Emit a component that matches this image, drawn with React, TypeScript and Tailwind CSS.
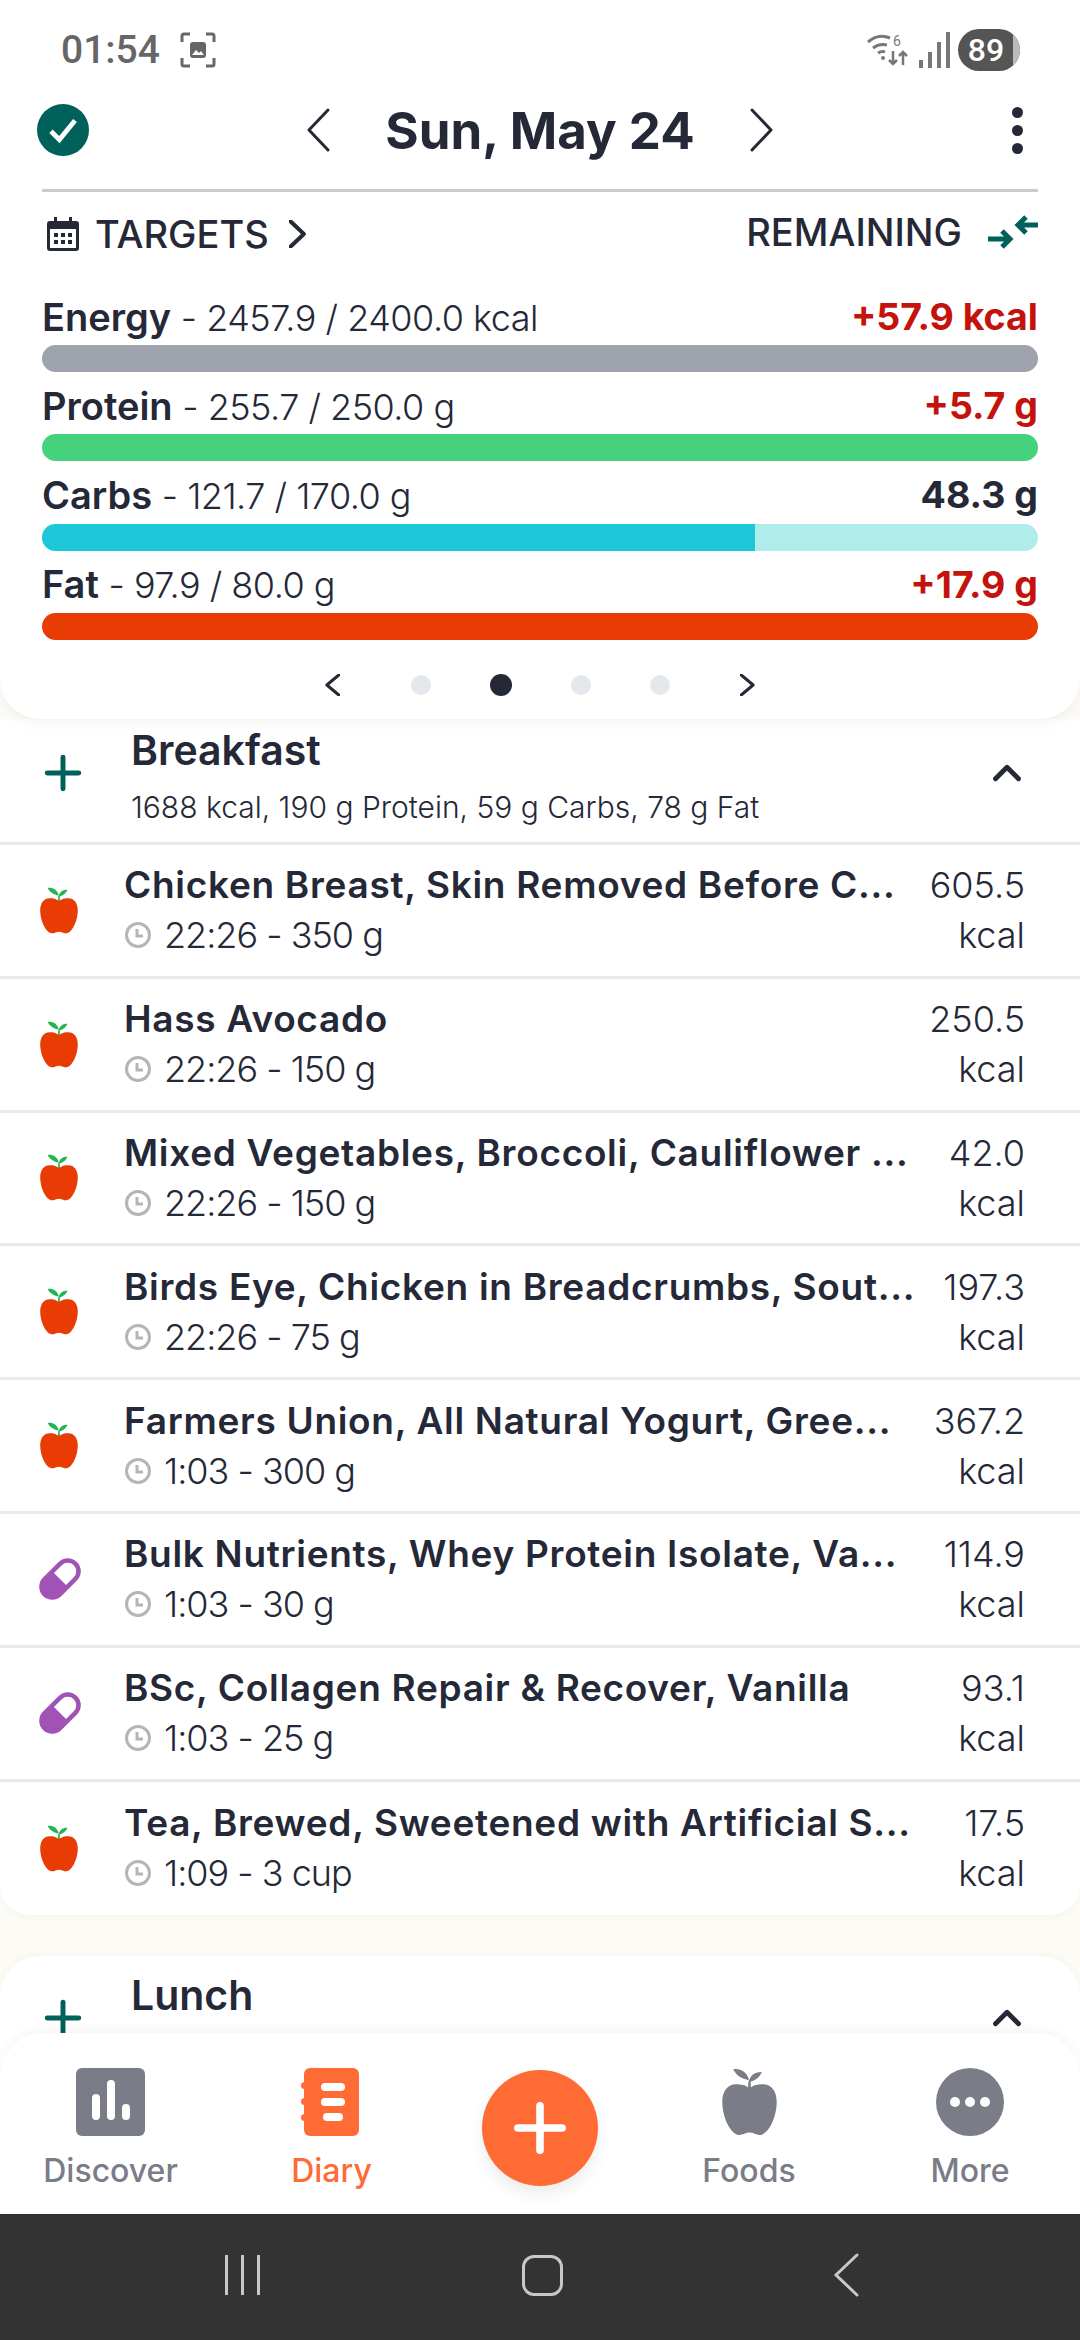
import { ChevronUp, Plus } from 'lucide-react'

const AppleIcon = ({ fill = '#e93c05', leaf = '#22b455', className = '' }: { fill?: string; leaf?: string; className?: string }) => (
  <svg viewBox="0 0 40 50" className={className}>
    <path d="M20 15c-3-2.500-6-3-10-3C4 12 0 17 0 25c0 10 5 22 11 24 3 1 6-1.500 9-1.500s6 2.500 9 1.500c6-2 11-14 11-24 0-8-4-13-10-13-4 0-7 .5-10 3z" fill={fill} />
    <path d="M19 15c0-3 0-5 1-7 1 1 1 3 1 7zM19 9C16 8 11 7 8 1c5-1 10 2 11.500 7zM20 9c1-4 4-6 9-6-1 3-4 6-8 7z" fill={leaf} />
  </svg>
)

const PillIcon = () => (
  <svg viewBox="0 0 44 44" className="h-[44px] w-[44px]">
    <g transform="rotate(-45 22 22)">
      <rect x="-2" y="9" width="48" height="26" rx="13" fill="#a052b5" />
      <path d="M22 13.500h11a8.500 8.500 0 0 1 0 17H22z" fill="#fff" />
    </g>
  </svg>
)

const ClockIcon = () => (
  <svg viewBox="0 0 28 28" className="h-[28px] w-[28px] shrink-0">
    <circle cx="14" cy="14" r="11.500" fill="none" stroke="#b5b5b5" strokeWidth="3" />
    <path d="M13 8v7h6" fill="none" stroke="#b5b5b5" strokeWidth="3" />
  </svg>
)

// thin chevrons: the lucide ones are too wide for this app
const Chevron = ({ left = false, className = '', stroke = 3 }: { left?: boolean; className?: string; stroke?: number }) => (
  <svg viewBox="0 0 24 44" preserveAspectRatio="none" className={className} fill="none" stroke="#252837" strokeWidth={stroke} strokeLinecap="round" strokeLinejoin="round">
    <path d={left ? 'M22 2L3 22l19 20' : 'M2 2l19 20L2 42'} vectorEffect="non-scaling-stroke" />
  </svg>
)

const macros = [
  { name: 'Energy', value: '2457.9 / 2400.0 kcal', left: '+57.9 kcal', over: true, color: 'bg-[#9ea3ae]', track: 'bg-[#9ea3ae]', width: '100%' },
  { name: 'Protein', value: '255.7 / 250.0 g', left: '+5.7 g', over: true, color: 'bg-[#46d17d]', track: 'bg-[#46d17d]', width: '100%' },
  { name: 'Carbs', value: '121.7 / 170.0 g', left: '48.3 g', over: false, color: 'bg-[#1cc8d8]', track: 'bg-[#b0ecec]', width: '71.6%' },
  { name: 'Fat', value: '97.9 / 80.0 g', left: '+17.9 g', over: true, color: 'bg-[#e93c05]', track: 'bg-[#e93c05]', width: '100%' },
]

const foods = [
  { name: 'Chicken Breast, Skin Removed Before C...', sub: '22:26 - 350 g', kcal: '605.5', pill: false },
  { name: 'Hass Avocado', sub: '22:26 - 150 g', kcal: '250.5', pill: false },
  { name: 'Mixed Vegetables, Broccoli, Cauliflower ...', sub: '22:26 - 150 g', kcal: '42.0', pill: false },
  { name: 'Birds Eye, Chicken in Breadcrumbs, Sout...', sub: '22:26 - 75 g', kcal: '197.3', pill: false },
  { name: 'Farmers Union, All Natural Yogurt, Gree...', sub: '1:03 - 300 g', kcal: '367.2', pill: false },
  { name: 'Bulk Nutrients, Whey Protein Isolate, Va...', sub: '1:03 - 30 g', kcal: '114.9', pill: true },
  { name: 'BSc, Collagen Repair & Recover, Vanilla', sub: '1:03 - 25 g', kcal: '93.1', pill: true },
  { name: 'Tea, Brewed, Sweetened with Artificial S...', sub: '1:09 - 3 cup', kcal: '17.5', pill: false },
]

const StatusBar = () => (
  <div className="relative z-20 flex h-[100px] items-center justify-between bg-white pl-[61px] pr-[60px] font-[Roboto,sans-serif] text-[#666]">
    <div className="flex items-center gap-[20px]">
      <span className="text-[39px] font-medium">01:54</span>
      <svg viewBox="0 0 36 36" className="h-[36px] w-[36px]" fill="none" stroke="#666" strokeWidth="3">
        <path d="M2 10V4a2 2 0 0 1 2-2h6M26 2h6a2 2 0 0 1 2 2v6M34 26v6a2 2 0 0 1-2 2h-6M10 34H4a2 2 0 0 1-2-2v-6" />
        <rect x="10" y="10" width="16" height="16" rx="3" fill="#666" stroke="none" />
        <path d="M12 23l4-5 3 3 2-2 3 4z" fill="#fff" stroke="none" />
      </svg>
    </div>
    <div className="flex items-center">
      <svg viewBox="0 0 42 34" className="mr-[10px] h-[34px] w-[42px]" fill="none" stroke="#777" strokeWidth="3">
        <path d="M1 9c7-6 15-7 22-4M6 15c5-4 10-4 14-3M11 20c3-2 5-2 7-1" />
        <circle cx="16" cy="25" r="2" fill="#777" stroke="none" />
        <path d="M26 18v13M22 27l4 4 4-4M36 32V20M32 23l4-4 4 4" strokeWidth="2.500" />
        <text x="26" y="13" fontSize="14" fill="#777" stroke="none" fontFamily="Roboto">6</text>
      </svg>
      <div className="mr-[8px] flex items-end gap-[5px]">
        <div className="h-[8px] w-[4px] bg-[#777]" />
        <div className="h-[16px] w-[4px] bg-[#777]" />
        <div className="h-[26px] w-[4px] bg-[#777]" />
        <div className="h-[36px] w-[4px] bg-[#777]" />
      </div>
      <div className="relative flex h-[42px] w-[62px] items-center justify-center overflow-hidden rounded-full bg-[#555] text-[32px] font-medium text-white">
        <span className="pr-[6px]">89</span>
        <div className="absolute inset-y-0 right-0 w-[7px] bg-[#bbb]" />
      </div>
    </div>
  </div>
)

const TopCard = () => (
  <div className="relative z-10 h-[619px] rounded-b-[40px] bg-white px-[42px] shadow-[0_4px_12px_rgba(120,110,80,0.08)]">
    <div className="relative flex h-[60px] items-center justify-center">
      <div className="absolute left-[-5px] flex h-[52px] w-[52px] items-center justify-center rounded-full bg-[#00615a]">
        <svg viewBox="0 0 30 30" className="h-[36px] w-[36px]" fill="none" stroke="#fff" strokeWidth="4">
          <path d="M5 16l7 7L25 7" />
        </svg>
      </div>
      <Chevron left className="h-[44px] w-[24px]" />
      <span className="mx-[55px] text-[51px] leading-none font-bold text-[#252837]">Sun, May 24</span>
      <Chevron className="h-[44px] w-[24px]" />
      <div className="absolute right-[15px] flex flex-col gap-[7px]">
        <div className="h-[11px] w-[11px] rounded-full bg-[#252837]" />
        <div className="h-[11px] w-[11px] rounded-full bg-[#252837]" />
        <div className="h-[11px] w-[11px] rounded-full bg-[#252837]" />
      </div>
    </div>
    <div className="mt-[29px] h-[3px] bg-[#c9ccd3]" />
    <div className="flex h-[84px] items-center justify-between">
      <div className="flex items-center">
        <svg viewBox="0 0 32 34" className="ml-[5px] mr-[16px] h-[34px] w-[32px]" fill="#252837">
          <path d="M7 0h3v4h12V0h3v4h4a3 3 0 0 1 3 3v24a3 3 0 0 1-3 3H3a3 3 0 0 1-3-3V7a3 3 0 0 1 3-3h4z" />
          <rect x="3" y="12" width="26" height="19" fill="#fff" />
          <path d="M7 16h4v4H7zM14 16h4v4h-4zM21 16h4v4h-4zM7 23h4v4H7zM14 23h4v4h-4zM21 23h4v4h-4z" />
        </svg>
        <span className="text-[38px] font-medium text-[#252837]">TARGETS</span>
        <Chevron className="ml-[20px] h-[28px] w-[17px]" stroke={4} />
      </div>
      <div className="flex items-center">
        <span className="mb-[4px] text-[38px] font-medium text-[#252837]">REMAINING</span>
        <svg viewBox="0 0 50 36" className="mb-[4px] ml-[26px] h-[36px] w-[50px]" fill="none" stroke="#00615a" strokeWidth="5">
          <path d="M50 11H32M38 3l-8 8 8 8" />
          <path d="M0 25h20M14 17l8 8-8 8" />
        </svg>
      </div>
    </div>
    <div className="mt-[7px]">
      {macros.map((m) => (
        <div key={m.name} className="h-[89.300px]">
          <div className="flex h-[62px] items-center justify-between whitespace-nowrap pt-[6px]">
            <span className="text-[36px] font-light tracking-[-0.5px] text-[#252837]">
              <span className="text-[38px] font-semibold tracking-normal">{m.name}</span> - {m.value}
            </span>
            <span className={`text-[37.500px] font-bold ${m.over ? 'text-[#c4120c]' : 'text-[#252837]'}`}>{m.left}</span>
          </div>
          <div className={`h-[27px] overflow-hidden rounded-full ${m.track}`}>
            <div className={`h-full ${m.color}`} style={{ width: m.width }} />
          </div>
        </div>
      ))}
    </div>
    <div className="relative mt-[34px] flex items-center justify-center gap-[59px]">
      <Chevron left className="absolute left-[283px] h-[22px] w-[15px]" />
      <div className="h-[20px] w-[20px] rounded-full bg-[#e4e7ec]" />
      <div className="h-[22px] w-[22px] rounded-full bg-[#252837]" />
      <div className="h-[20px] w-[20px] rounded-full bg-[#e4e7ec]" />
      <div className="h-[20px] w-[20px] rounded-full bg-[#e4e7ec]" />
      <Chevron className="absolute right-[283px] h-[22px] w-[15px]" />
    </div>
  </div>
)

const FoodRow = ({ name, sub, kcal, pill, last }: { name: string; sub: string; kcal: string; pill: boolean; last: boolean }) => (
  <div className={`flex h-[133.800px] items-center pl-[38px] pr-[55px] ${last ? '' : 'border-b-[3px] border-[#e8e9ed]'}`}>
    <div className="flex w-[86px] shrink-0 items-center">
      {pill ? <PillIcon /> : <AppleIcon className="ml-[2px] h-[47px] w-[38px]" />}
    </div>
    <div className="min-w-0 flex-1">
      <p className="truncate text-[37px] leading-[50px] font-semibold tracking-[0.7px] text-[#252837]">{name}</p>
      <div className="flex items-center gap-[12px]">
        <ClockIcon />
        <span className="text-[36px] leading-[50px] font-light tracking-[-1px] text-[#252837]">{sub}</span>
      </div>
    </div>
    <div className="shrink-0 pl-[10px] text-right text-[36px] leading-[50px] font-light text-[#252837]">
      <p>{kcal}</p>
      <p>kcal</p>
    </div>
  </div>
)

const MealHeader = ({ title, summary }: { title: string; summary?: string }) => (
  <div className="relative h-[122px] px-[44px]">
    <Plus className="absolute left-[36px] top-[26px] h-[54px] w-[54px] text-[#00615a]" strokeWidth={2.200} />
    <p className="pl-[87px] text-[41px] leading-[60px] font-semibold text-[#252837]">{title}</p>
    {summary && <p className="mt-[-1px] pl-[87px] text-[30px] leading-[56px] font-light text-[#252837]">{summary}</p>}
    <ChevronUp className="absolute right-[50px] top-[30px] h-[46px] w-[46px] text-[#252837]" strokeWidth={2.500} />
  </div>
)

const NavItem = ({ label, className, children }: { label: string; className: string; children: React.ReactNode }) => (
  <div className={`flex flex-col items-center text-[#7a7c88] ${className}`}>
    {children}
    <span className="mt-[13px] text-[32px] leading-[44px] font-medium">{label}</span>
  </div>
)

const BottomNav = () => (
  <div className="relative z-20 mt-[-40px] flex h-[181px] rounded-t-[44px] bg-white pt-[35px] shadow-[0_-4px_12px_rgba(0,0,0,0.04)]">
    <NavItem label="Discover" className="w-[221px]">
      <div className="flex h-[68px] w-[69px] items-end justify-center gap-[7px] rounded-[6px] bg-[#7a7c88] pb-[16px]">
        <div className="h-[26px] w-[8px] rounded-full bg-white" />
        <div className="h-[40px] w-[8px] rounded-full bg-white" />
        <div className="h-[16px] w-[8px] rounded-full bg-white" />
      </div>
    </NavItem>
    <NavItem label="Diary" className="w-[221px] text-[#ff6b35]">
      <div className="relative flex h-[68px] w-[55px] flex-col items-center justify-center gap-[7px] rounded-[6px] bg-[#ff6b35] pl-[3px]">
        <div className="h-[8px] w-[24px] rounded-full bg-white" />
        <div className="h-[8px] w-[24px] rounded-full bg-white" />
        <div className="h-[8px] w-[20px] rounded-full bg-white" />
        <div className="absolute left-[-3px] top-[14px] h-[7px] w-[7px] rounded-full bg-[#ff6b35]" />
        <div className="absolute left-[-3px] top-[30px] h-[7px] w-[7px] rounded-full bg-[#ff6b35]" />
        <div className="absolute left-[-3px] top-[46px] h-[7px] w-[7px] rounded-full bg-[#ff6b35]" />
      </div>
    </NavItem>
    <div className="flex w-[196px] justify-center pt-[2px]">
      <div className="flex h-[116px] w-[116px] items-center justify-center rounded-full bg-[#ff6b35] shadow-[0_8px_16px_rgba(0,0,0,0.08)]">
        <Plus className="h-[76px] w-[76px] text-white" strokeWidth={2.400} />
      </div>
    </div>
    <NavItem label="Foods" className="flex-1">
      <AppleIcon fill="#7a7c88" leaf="#7a7c88" className="h-[68px] w-[63px]" />
    </NavItem>
    <NavItem label="More" className="w-[220px]">
      <div className="flex h-[68px] w-[68px] items-center justify-center gap-[5px] rounded-full bg-[#7a7c88]">
        <div className="h-[10px] w-[10px] rounded-full bg-white" />
        <div className="h-[10px] w-[10px] rounded-full bg-white" />
        <div className="h-[10px] w-[10px] rounded-full bg-white" />
      </div>
    </NavItem>
  </div>
)

export default function App() {
  return (
    <div className="flex h-[2340px] w-[1080px] flex-col overflow-hidden bg-[#fdfbf6] font-[Inter,sans-serif]">
      <StatusBar />
      <TopCard />
      <div className="min-h-0 flex-1 overflow-hidden">
        <div className="rounded-b-[30px] bg-white pt-[1px] shadow-[0_2px_8px_rgba(120,110,80,0.05)]">
          <MealHeader title="Breakfast" summary="1688 kcal, 190 g Protein, 59 g Carbs, 78 g Fat" />
          <div className="h-[3px] bg-[#e8e9ed]" />
          {foods.map((f, i) => (
            <FoodRow key={f.name} {...f} last={i === foods.length - 1} />
          ))}
        </div>
        <div className="mt-[41px] rounded-t-[40px] bg-white pt-[9px] shadow-[0_-2px_8px_rgba(120,110,80,0.05)]">
          <MealHeader title="Lunch" />
        </div>
      </div>
      <BottomNav />
      <div className="flex h-[126px] items-center bg-[#333] pb-[4px]">
        <div className="flex w-[484px] justify-center gap-[13px]">
          <div className="h-[40px] w-[3px] bg-[#c8c8c8]" />
          <div className="h-[40px] w-[3px] bg-[#c8c8c8]" />
          <div className="h-[40px] w-[3px] bg-[#c8c8c8]" />
        </div>
        <div className="ml-[38px] h-[41px] w-[41px] rounded-[12px] border-[3px] border-[#c8c8c8]" />
        <svg viewBox="0 0 26 44" className="ml-[270px] h-[44px] w-[26px]" fill="none" stroke="#c8c8c8" strokeWidth="3" strokeLinecap="round">
          <path d="M24 2L3 22l21 20" />
        </svg>
      </div>
    </div>
  )
}
